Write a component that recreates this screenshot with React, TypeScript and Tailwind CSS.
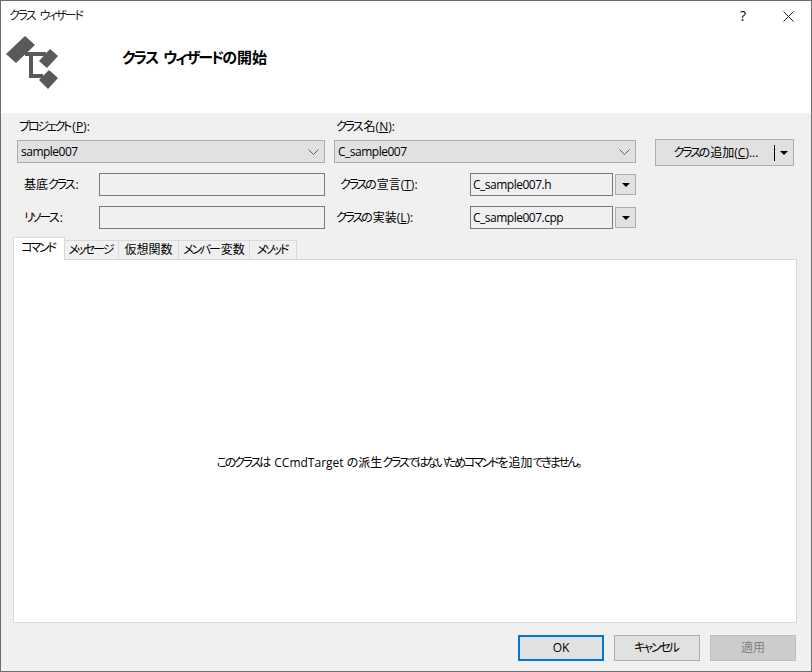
import React, { FC } from 'react';

const palt = "[font-feature-settings:'palt']";

// kana is set much tighter than kanji and latin in this dialog font;
// the last kana of a run stays untracked so it doesn't run into what follows
const Jp: FC<{ text: string; kanaClass?: string }> = ({ text, kanaClass = 'tracking-[-2.2px]' }) => (
  <>
    {text.split(/([\u3041-\u30ff\u3002]+)/).map((part, i) =>
      i % 2 === 1 ? (
        <span key={i}>
          <span className={kanaClass}>{part.slice(0, -1)}</span>
          {part.slice(-1)}
        </span>
      ) : (
        <span key={i}>{part}</span>
      ),
    )}
  </>
);

const Chevron: FC = () => (
  <svg width="11" height="6" viewBox="0 0 11 6" fill="none" stroke="#606060" strokeWidth="1">
    <path d="M0.5 0.5 L5.5 5.5 L10.5 0.5" />
  </svg>
);

const Caret: FC = () => (
  <svg width="8" height="4" viewBox="0 0 8 4" fill="#000">
    <path d="M0 0 H8 L4 4 Z" />
  </svg>
);

const Combo: FC<{ value: string; className: string }> = ({ value, className }) => (
  <div
    className={`flex h-[23px] items-center justify-between border border-[#adadad] bg-[#e1e1e1] pl-[3px] pr-[5px] ${className}`}
  >
    <span className="tracking-[-0.5px]">{value}</span>
    <Chevron />
  </div>
);

const ReadOnlyBox: FC<{ className: string; value?: string }> = ({ className, value }) => (
  <div className={`flex h-[23px] items-center border border-[#7a7a7a] bg-[#f0f0f0] pl-[2px] tracking-[-0.5px] ${className}`}>
    {value}
  </div>
);

const DropButton: FC = () => (
  <div className="ml-[2px] flex h-[21px] w-[21px] items-center justify-center border border-[#adadad] bg-[#e1e1e1]">
    <Caret />
  </div>
);

const TABS = [
  { label: 'メッセージ', className: 'w-[54px]' },
  { label: '仮想関数', className: 'w-[60px]' },
  { label: 'メンバー変数', className: 'w-[71px]' },
  { label: 'メソッド', className: 'w-[47px]' },
];

export default function App() {
  return (
    <div
      className={`flex h-[672px] w-[812px] flex-col overflow-hidden border border-[#6d6d6d] bg-[#f0f0f0] text-[12px] leading-none text-black ${palt}`}
      style={{ fontFamily: '"Open Sans", "Noto Sans CJK JP", sans-serif' }}
    >
      {/* Title bar + header */}
      <div className="h-[112px] shrink-0 bg-white">
        <div className="flex h-[29px] items-center pl-[8px] pt-[1px]">
          <span className="flex-1 whitespace-pre text-[#222]">
            <Jp text="クラス ウィザード" />
          </span>
          <span className="mr-[37px] text-[14px]">?</span>
          <svg className="mr-[17px]" width="11" height="11" viewBox="0 0 11 11" stroke="#222" fill="none">
            <path d="M0.5 0.5 L10.5 10.5 M10.5 0.5 L0.5 10.5" />
          </svg>
        </div>
        <div className="flex pl-[4px] pt-[5px]">
          <svg width="54" height="56" viewBox="5 35 54 56" fill="#595959">
            <path d="M6 54 L25 36 L35 45 L16 63 Z" />
            <path d="M39 61 L50 49 L58 56 L47 68 Z" />
            <path d="M39 80 L49 70 L58 78 L48 89 Z" />
            <path d="M25 52 H46 V56 H33 V74 H43 V78 H29 V56 H25 Z" />
          </svg>
          <span className="ml-[63px] mt-[15px] whitespace-pre text-[15px] font-bold">
            <Jp text="クラス ウィザードの開始" kanaClass="tracking-[-2px]" />
          </span>
        </div>
      </div>

      {/* Form */}
      <div className="flex h-[26px] shrink-0 items-center pl-[18px] pt-[2px]">
        <span className="w-[317px]">
          <Jp text="プロジェクト" />(<u>P</u>):
        </span>
        <span>
          <Jp text="クラス名" />(<u>N</u>):
        </span>
      </div>

      <div className="flex h-[27px] shrink-0 items-start pl-[16px]">
        <Combo value="sample007" className="mt-px w-[308px]" />
        <Combo value="C_sample007" className="ml-[9px] mt-px w-[302px]" />
        <div className="ml-[19px] flex h-[27px] w-[139px] items-center border border-[#adadad] bg-[#e1e1e1]">
          <span className="w-[118px] pl-[2px] text-center">
            <Jp text="クラスの追加" />(<u>C</u>)...
          </span>
          <span className="h-[16px] w-px bg-black" />
          <span className="flex flex-1 justify-center">
            <Caret />
          </span>
        </div>
      </div>

      <div className="mt-[7px] flex shrink-0 items-center pl-[23px]">
        <span className="w-[75px]">
          <Jp text="基底クラス" />:
        </span>
        <ReadOnlyBox className="w-[226px]" />
        <span className="ml-[15px] w-[130px]">
          <Jp text="クラスの宣言" />(<u>T</u>):
        </span>
        <ReadOnlyBox className="w-[143px]" value="C_sample007.h" />
        <DropButton />
      </div>

      <div className="mt-[10px] flex shrink-0 items-center pl-[23px]">
        <span className="w-[75px]">
          <Jp text="リソース" />:
        </span>
        <ReadOnlyBox className="w-[226px]" />
        <span className="ml-[11px] w-[134px]">
          <Jp text="クラスの実装" />(<u>L</u>):
        </span>
        <ReadOnlyBox className="w-[143px]" value="C_sample007.cpp" />
        <DropButton />
      </div>

      {/* Tabs */}
      <div className="relative z-10 mt-[8px] flex h-[23px] shrink-0 items-end pl-[12px]">
        <div className="flex h-[23px] w-[52px] items-center justify-center border border-b-0 border-[#d9d9d9] bg-white pb-[2px]">
          <span>
            <Jp text="コマンド" />
          </span>
        </div>
        {TABS.map((tab) => (
          <div
            key={tab.label}
            className={`flex h-[20px] items-center justify-center whitespace-nowrap border border-l-0 border-[#d9d9d9] bg-[#f0f0f0] ${tab.className}`}
          >
            <span>
              <Jp text={tab.label} />
            </span>
          </div>
        ))}
      </div>

      {/* Tab panel */}
      <div className="-mt-px ml-[12px] mr-[14px] flex h-[364px] shrink-0 items-center justify-center border border-[#d9d9d9] bg-white pr-[11px] pt-[44px]">
        <span className="whitespace-nowrap">
          <Jp text="このクラスは CCmdTarget の派生クラスではないためコマンドを追加できません。" />
        </span>
      </div>

      {/* Footer buttons */}
      <div className="mt-[12px] flex shrink-0 justify-end gap-[10px] pr-[15px]">
        <div className="flex h-[26px] w-[86px] items-center justify-center border-2 border-[#0078d7] bg-[#e1e1e1]">OK</div>
        <div className="flex h-[26px] w-[86px] items-center justify-center border border-[#adadad] bg-[#e1e1e1]">
          <span>
            <Jp text="キャンセル" />
          </span>
        </div>
        <div className="flex h-[26px] w-[86px] items-center justify-center border border-[#bfbfbf] bg-[#cccccc] text-[#838383]">適用</div>
      </div>
    </div>
  );
}
